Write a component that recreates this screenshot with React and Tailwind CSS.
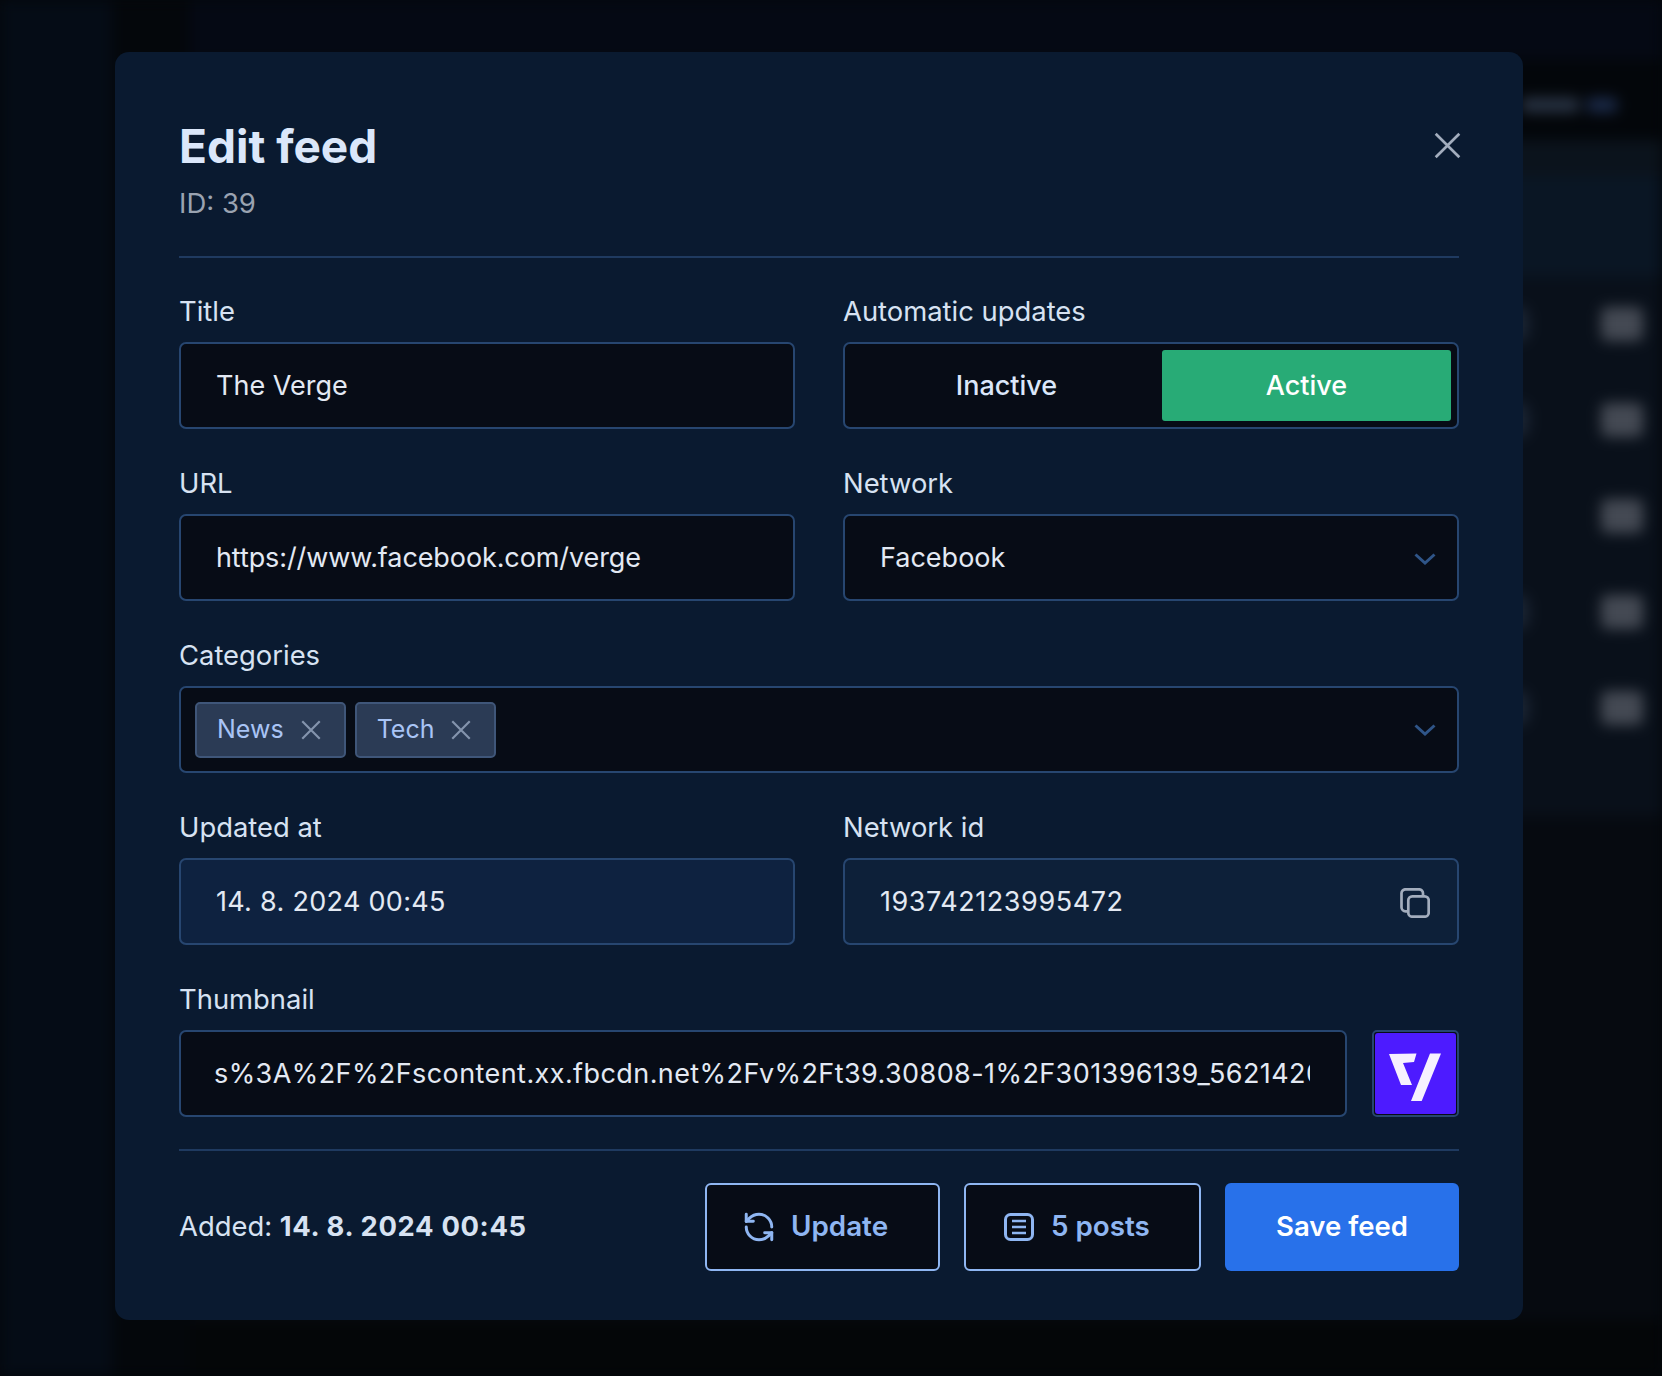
import React from "react";
import { RefreshCcw } from "lucide-react";

const font = { fontFamily: "Inter, 'Noto Sans', sans-serif" };

function Label({ children }) {
  return <div className="h-[31px] mb-[15px] text-[27.4px] leading-[31px] text-[#d7e2f2] whitespace-nowrap">{children}</div>;
}

function Box({ className = "", children }) {
  return (
    <div className={"h-[87px] rounded-[7px] border-2 border-[#274670] flex items-center text-[27px] text-[#e3e9f3] " + className}>
      {children}
    </div>
  );
}

function Field({ label, children }) {
  return (
    <div className="min-w-0">
      <Label>{label}</Label>
      {children}
    </div>
  );
}

function Cross({ size, width, className }) {
  return (
    <svg width={size} height={size} viewBox="0 0 24 24" fill="none" stroke="currentColor" strokeWidth={width} className={className}>
      <path d="M1.500 1.500L22.500 22.500M22.500 1.500L1.500 22.500" />
    </svg>
  );
}

function Tag({ children }) {
  return (
    <div className="h-[56px] rounded-[5px] border-2 border-[#3f5679] bg-[#2b3b55] flex items-center pl-[20px] pr-[23px] gap-[17px] text-[25px] text-[#a9c4f5]">
      <span className="pt-[1px]">{children}</span>
      <Cross size={20} width={2.6} className="text-[#8494ad]" />
    </div>
  );
}

function Chevron() {
  return (
    <svg width="22" height="12" viewBox="0 0 22 12" fill="none" stroke="#2f5588" strokeWidth="3" className="ml-auto">
      <path d="M1.500 1.500L11 10L20.500 1.500" />
    </svg>
  );
}

function CopyIcon() {
  return (
    <svg width="30" height="30" viewBox="0 0 30 30" fill="none" stroke="#a3adbd" strokeWidth="2.7">
      <rect x="8.300" y="8.300" width="20.400" height="20.400" rx="4" />
      <path d="M8 23.300h-2.500a4 4 0 0 1 -4 -4v-14a4 4 0 0 1 4 -4h13.500a4 4 0 0 1 4 4v2.500" />
    </svg>
  );
}

function PostsIcon() {
  return (
    <svg width="30" height="28" viewBox="0 0 30 28" fill="none" stroke="#8fb6f2" strokeWidth="3">
      <rect x="1.500" y="1.500" width="27" height="25" rx="5" />
      <path d="M8 8h14M8 14h14M8 20h14" strokeWidth="2.600" />
    </svg>
  );
}

function OutlineButton({ icon, children, className }) {
  return (
    <div className={"h-[88px] rounded-[6px] border-2 border-[#8fb6f2] bg-[#070c16] flex items-center text-[27.800px] font-semibold text-[#8fb6f2] " + className}>
      {icon}
      <span>{children}</span>
    </div>
  );
}

function Row({ side }) {
  return (
    <div className="h-[96px] flex items-center justify-end pr-[19px] bg-[#09101a]">
      {side && <div className="w-[20px] h-[36px] rounded-full bg-[#1a2433] mr-[72px]" />}
      <div className="w-[42px] h-[34px] rounded-[6px] bg-[#444953]" />
    </div>
  );
}

function Backdrop() {
  return (
    <div className="h-full flex blur-[7px]">
      <div className="w-[112px] h-full bg-[#050c16]" />
      <div className="w-[78px] h-full bg-[#04070b]" />
      <div className="flex-1 flex flex-col bg-[#060a10]">
        <div className="h-[60px] bg-[#050914]" />
        <div className="h-[80px] bg-[#03060a] flex items-center justify-end pr-[45px] pt-[10px] gap-[8px]">
          <div className="w-[58px] h-[14px] rounded bg-[#2a3546]" />
          <div className="w-[30px] h-[14px] rounded bg-[#1c2c4c]" />
        </div>
        <div className="h-[36px] bg-[#0b131c]" />
        <div className="h-[100px] bg-[#0a1624]" />
        <Row side />
        <Row side />
        <Row />
        <Row side />
        <Row side />
        <div className="h-[60px] bg-[#09101a]" />
        <div className="flex-1 bg-[#060a10]" />
        <div className="h-[56px] bg-[#040608]" />
      </div>
    </div>
  );
}

export default function App() {
  return (
    <div className="relative w-[1662px] h-[1376px] overflow-hidden bg-[#04070b]" style={font}>
      <Backdrop />
      <div className="absolute left-[115px] top-[52px] w-[1408px] h-[1268px] rounded-[14px] bg-[#0a1a30] px-[64px] pt-[66px]">
        <div className="relative h-[140px] border-b-2 border-[#1f3a60]">
          <h1 className="text-[46px] leading-[56px] font-bold text-[#dbe7fa]">Edit feed</h1>
          <div className="mt-[14px] text-[27.500px] leading-[31px] text-[#9aa3b1]">ID: 39</div>
          <Cross size={27} width={2.4} className="absolute right-[-2px] top-[14px] text-[#a3adbd]" />
        </div>
        <div className="mt-[38px] flex flex-col gap-[39px]">
          <div className="grid grid-cols-2 gap-x-[48px]">
            <Field label="Title">
              <Box className="bg-[#070c16] pl-[35px] pt-[2px]">The Verge</Box>
            </Field>
            <Field label="Automatic updates">
              <Box className="bg-[#070c16] p-[6px] font-medium text-[27.500px]">
                <div className="flex-1 text-center pt-[2px] text-[#dbe7fa]">Inactive</div>
                <div className="w-[289px] h-full rounded-[3px] bg-[#28ab76] text-white pt-[2px] flex items-center justify-center">Active</div>
              </Box>
            </Field>
          </div>
          <div className="grid grid-cols-2 gap-x-[48px]">
            <Field label="URL">
              <Box className="bg-[#070c16] pl-[35px] pt-[2px] tracking-[-0.1px]">https://www.facebook.com/verge</Box>
            </Field>
            <Field label="Network">
              <Box className="bg-[#070c16] pl-[35px] pr-[21px] pt-[2px]">
                Facebook
                <Chevron />
              </Box>
            </Field>
          </div>
          <Field label="Categories">
            <Box className="bg-[#070c16] pl-[14px] pr-[21px] gap-[9px]">
              <Tag>News</Tag>
              <Tag>Tech</Tag>
              <Chevron />
            </Box>
          </Field>
          <div className="grid grid-cols-2 gap-x-[48px]">
            <Field label="Updated at">
              <Box className="bg-[#0e2240] pl-[35px] pt-[2px] tracking-[0.3px]">14. 8. 2024 00:45</Box>
            </Field>
            <Field label="Network id">
              <Box className="bg-[#0d2039] pl-[35px] pr-[27px] pt-[2px] justify-between tracking-[0.55px]">
                193742123995472
                <CopyIcon />
              </Box>
            </Field>
          </div>
          <Field label="Thumbnail">
            <div className="flex gap-[25px]">
              <Box className="flex-1 min-w-0 bg-[#070c16] pl-[33px] pr-[35px] pt-[2px]">
                <div className="overflow-hidden whitespace-nowrap w-full tracking-[0.42px]">
                  s%3A%2F%2Fscontent.xx.fbcdn.net%2Fv%2Ft39.30808-1%2F301396139_562142059
                </div>
              </Box>
              <div className="w-[87px] h-[87px] shrink-0 rounded-[5px] border-2 border-[#274670] bg-[#070c16] p-[1px]">
                <div className="w-full h-full rounded-[3px] bg-[#4d1bff] flex items-center justify-center">
                  <svg width="81" height="81" viewBox="0 0 81 81" fill="#f6f1ff">
                    <path d="M14 21L41.500 20.500L39 29L28 30L37 52L26 52Z" />
                    <path d="M55 20.500H66L46.700 68H36Z" />
                  </svg>
                </div>
              </div>
            </div>
          </Field>
        </div>
        <div className="mt-[32px] border-t-2 border-[#1f3a60] pt-[32px] flex items-center">
          <div className="text-[27.400px] text-[#d7e2f2] whitespace-nowrap">
            Added: <span className="font-bold tracking-[0.65px]">14. 8. 2024 00:45</span>
          </div>
          <div className="ml-auto flex gap-[24px]">
            <OutlineButton icon={<RefreshCcw size={34} strokeWidth={2.1} />} className="w-[235px] pl-[35px] gap-[15px]">Update</OutlineButton>
            <OutlineButton icon={<PostsIcon />} className="w-[237px] pl-[38px] gap-[17px]">5 posts</OutlineButton>
            <div className="w-[234px] h-[88px] rounded-[6px] bg-[#2871ea] flex items-center justify-center text-[27.500px] font-semibold text-white">
              Save feed
            </div>
          </div>
        </div>
      </div>
    </div>
  );
}
